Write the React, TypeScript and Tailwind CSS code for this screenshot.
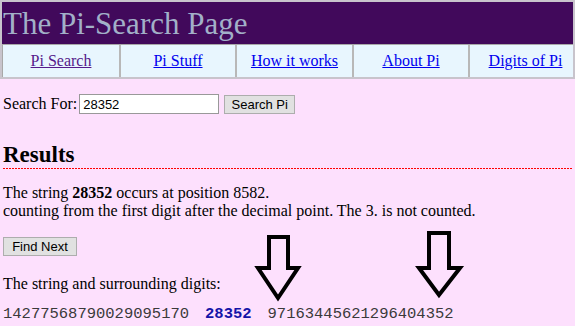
import React from 'react';

const navLinks = [
  { label: 'Pi Search', visited: true },
  { label: 'Pi Stuff', visited: false },
  { label: 'How it works', visited: false },
  { label: 'About Pi', visited: false },
  { label: 'Digits of Pi', visited: false },
];

const App = () => {
  return (
    <div className="relative w-[575px] h-[326px] overflow-hidden bg-[#fde0fd] font-['Liberation_Serif',serif] text-black">
      {/* Title + navigation */}
      <div className="border-2 border-[#c8c4cc]">
        <div className="h-[42px] bg-[#41095b] pt-[6px] pl-[1px]">
          <h1 className="text-[31px] leading-[31px] text-[#a2b0c8]">The Pi-Search Page</h1>
        </div>
        <nav className="grid grid-cols-[117px_116px_117px_116px_1fr] border-t border-[#a8a8a8] bg-[#e8f6fe]">
          {navLinks.map((link, i) => (
            <div
              key={link.label}
              className={`h-[32px] flex items-center justify-center text-[16px] ${i === 0 ? 'border-l border-[#a8a8a8]' : 'border-l-2 border-[#b8b8b8]'} ${i === 4 ? 'pl-[8px]' : ''}`}
            >
              <a href="#" className={`underline ${link.visited ? 'text-[#551a8b]' : 'text-[#0000ee]'}`}>
                {link.label}
              </a>
            </div>
          ))}
        </nav>
      </div>

      <div className="px-[3px]">
        {/* Search form */}
        <div className="mt-[15px] flex items-center h-[20px]">
          <span className="text-[16px] leading-[18px]">Search For:</span>
          <input
            defaultValue="28352"
            className="ml-[2px] w-[140px] h-[20px] bg-white border border-[#999999] px-[3px] text-[13px] font-['Liberation_Sans',Arial,sans-serif] outline-none"
          />
          <button className="ml-[5px] w-[71px] h-[19px] bg-[#e1e1e1] border border-[#adadad] text-[13px] leading-none font-['Liberation_Sans',Arial,sans-serif]">
            Search Pi
          </button>
        </div>

        {/* Results */}
        <h2 className="mt-[29px] text-[23px] leading-[23px] font-bold pb-[2px]">Results</h2>
        <div className="h-px bg-[repeating-linear-gradient(90deg,#ff0000_0px,#ff0000_2px,transparent_2px,transparent_3px)]" />
        <p className="mt-[15px] text-[16px] leading-[18px]">
          The string <b>28352</b> occurs at position 8582.
          <br />
          counting from the first digit after the decimal point. The 3. is not counted.
        </p>
        <button className="mt-[17px] block w-[74px] h-[19px] bg-[#e1e1e1] border border-[#adadad] text-[13px] leading-none font-['Liberation_Sans',Arial,sans-serif]">
          Find Next
        </button>
        <p className="mt-[19px] text-[16px] leading-[18px]">The string and surrounding digits:</p>
        <div className="mt-[12px] flex font-['Liberation_Mono','Courier_New',monospace] text-[15.5px] leading-[18px] text-[#3a3a3a]">
          <span>14277568790029095170</span>
          <span className="ml-4 font-bold text-[#1414a8]">28352</span>
          <span className="ml-4">97163445621296404352</span>
        </div>
      </div>

      {/* Annotation arrows */}
      <svg className="absolute inset-0 pointer-events-none" width="575" height="326" viewBox="0 0 575 326">
        <polygon
          points="269,237 288,237 288,268 298,268 278,298 258,268 269,268"
          fill="none"
          stroke="#000"
          strokeWidth="4"
          strokeLinejoin="miter"
        />
        <polygon
          points="429,233 449,233 449,268 460,268 439,295 419,268 429,268"
          fill="none"
          stroke="#000"
          strokeWidth="4"
          strokeLinejoin="miter"
        />
      </svg>
    </div>
  );
};

export default App;
